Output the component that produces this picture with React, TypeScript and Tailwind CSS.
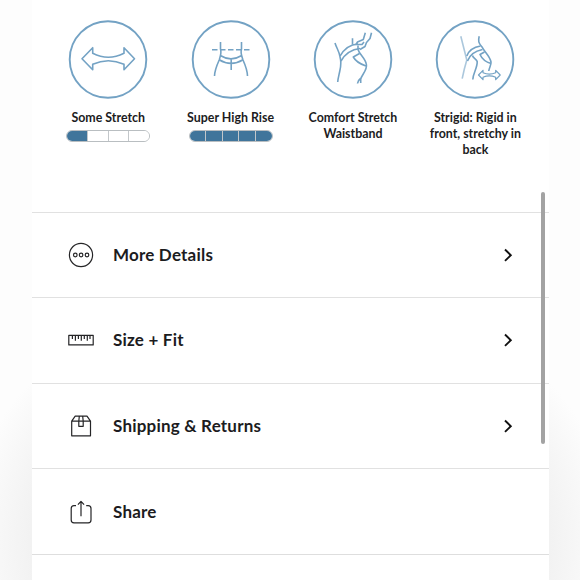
import type { ReactNode } from 'react';

type Feature = {
  label: string;
  icon: ReactNode;
  meter?: { filled: number; total: number };
};

const features: Feature[] = [
  {
    label: 'Some Stretch',
    meter: { filled: 1, total: 4 },
    icon: (
      <path d="M14 38.7 24.7 27.7V33.3Q40.3 41.3 56 33.3V27.7L66.5 38.7 56 49.7V44.3Q40.3 37.1 24.7 44.3V49.7Z" />
    ),
  },
  {
    label: 'Super High Rise',
    meter: { filled: 5, total: 5 },
    icon: (
      <>
        <path d="M21 29.7H60" strokeDasharray="5.5 2.5" />
        <path d="M29.5 22V29C30.8 33 29.3 36 28.2 40C25.5 46 23.7 50 23.5 56" />
        <path d="M50.5 22V29C49.2 33 50.7 36 52 40C54.7 46 56.3 50 56.5 56" />
        <path d="M29.8 35.7Q40 42 50.2 35.7M28.2 39.7Q40 47 52 39.7M40.2 39.5V50" />
      </>
    ),
  },
  {
    label: 'Comfort Stretch Waistband',
    icon: (
      <>
        <path d="M22 23C23.5 28 26.5 32 27 36.7C28.5 42 28 46 26.8 51C26 55 25 58 24.7 62" />
        <path d="M27 36.2C31 29 37 24.5 45 24M28 41C32 34 38 29.5 47 28.5" />
        <path d="M39.5 18.3V24.5M52.3 12.7 50.3 19.5 44.5 22 43 24.5H49L51 22M58.5 12.7 57 18.5 53.5 22.5 52 26.5 47 29.5" />
        <path d="M45 25.5V29.5C46.5 34.5 52 38 53.3 44C54.8 50 48.5 55 47.7 59V63" />
        <path d="M46.5 33.5 40.3 37C43 42 47 44 53 46M47.5 58.5C45.5 60 44.8 61.5 44.5 63.5" />
      </>
    ),
  },
  {
    label: 'Strigid: Rigid in front, stretchy in back',
    icon: (
      <>
        <path className="opacity-60" d="M25.8 16.3 31.8 40C30 46 28.5 52 27.2 58.7" />
        <path d="M44.2 16.3C43 21 43.5 23 46.8 26.7C49.5 32 55 36 56 42C56.3 45.5 54 48 53.8 51" />
        <path d="M31.8 36C34 30 39 27 45.5 26M32.5 41C35 34 40 31 47.5 29.5" />
        <path d="M37.5 35.5C38 38 41.5 39 42.2 41.5C42.5 48 38 53 37.8 59.5" />
        <path d="M49.5 32 45 34.5C47 39 51 42 56 43.5" />
        <path
          strokeWidth="1.2"
          d="M43.5 55 48 50.3V52.7Q54.3 55.5 60.7 52.7V50.3L65.2 55 60.7 59.7V57.3Q54.3 54.5 48 57.3V59.7Z"
        />
      </>
    ),
  },
];

const rows: { label: string; icon: ReactNode; chevron: boolean }[] = [
  {
    label: 'More Details',
    chevron: true,
    icon: (
      <>
        <circle cx="14" cy="14" r="11.6" />
        <circle cx="8.3" cy="14" r="1.8" />
        <circle cx="14.1" cy="14" r="1.8" />
        <circle cx="20" cy="14" r="1.8" />
      </>
    ),
  },
  {
    label: 'Size + Fit',
    chevron: true,
    icon: <path d="M1.8 9.3H26.2V18.9H1.8ZM5.4 9.3V13M8.4 9.3V14.8M11.4 9.3V13M14.3 9.3V14.8M17.3 9.3V13M20.3 9.3V14.8M23 9.3V13" />,
  },
  {
    label: 'Shipping & Returns',
    chevron: true,
    icon: <path d="M4.7 9.2 8.2 4.2H20L23.5 9.2V23.8H4.7ZM4.7 9.2H23.5M12.3 4.2 11.8 9.2V14.3H16.2V9.2L15.7 4.2" />,
  },
  {
    label: 'Share',
    chevron: false,
    icon: <path d="M9 7.7H7Q4.2 7.7 4.2 10.5V22Q4.2 24.8 7 24.8H21.2Q24 24.8 24 22V10.5Q24 7.7 21.2 7.7H19.2M14 18.3V3.7M10.9 6.6 14 3.4 17.1 6.6" />,
  },
];

function Meter({ filled, total }: { filled: number; total: number }) {
  return (
    <div className="mt-1 flex h-3 w-[84px] overflow-hidden rounded-full border border-[#b9bec1]">
      {Array.from({ length: total }, (_, i) => (
        <div
          key={i}
          className={`flex-1 border-[#c3c7ca] ${i > 0 ? 'border-l' : ''} ${i < filled ? 'bg-[#40759b]' : 'bg-white'}`}
        />
      ))}
    </div>
  );
}

export default function App() {
  return (
    <div className="h-[580px] w-[580px] overflow-hidden bg-[radial-gradient(310px_250px_at_290px_540px,#f1f1f1_82%,#fdfdfd_105%)] pl-8 font-['Lato',sans-serif] text-[#1c1c1e]">
      <main className="relative h-full w-[517px] bg-white">
        <section className="grid h-[211.5px] grid-cols-[repeat(4,122.4px)] pt-[20px] pl-[15px]">
          {features.map((feature) => (
            <div key={feature.label} className="flex flex-col items-center">
              <svg
                viewBox="0 0 80 80"
                className="size-20 shrink-0"
                fill="none"
                stroke="#73a2c4"
                strokeWidth="1.6"
                strokeLinejoin="round"
              >
                <circle cx="40" cy="39.5" r="38.3" strokeWidth="1.9" />
                {feature.icon}
              </svg>
              <p className="mt-2.5 w-[96px] text-center text-[12.4px] leading-4 font-bold">{feature.label}</p>
              {feature.meter && <Meter {...feature.meter} />}
            </div>
          ))}
        </section>

        <ul className="border-b border-[#dedede]">
          {rows.map((row) => (
            <li
              key={row.label}
              className="flex h-[85.6px] items-center border-t border-[#e1e1e1] pr-[34px] pl-[35px]"
            >
              <svg viewBox="0 0 28 28" className="size-7" fill="none" stroke="#252527" strokeWidth="1.2" strokeLinejoin="round">
                {row.icon}
              </svg>
              <span className="ml-[18px] text-[17px] leading-6 font-bold tracking-[0.2px]">{row.label}</span>
              {row.chevron && (
                <svg viewBox="0 0 14 14" className="ml-auto size-3.5" fill="none" stroke="#111" strokeWidth="1.9">
                  <path d="M4 1.5 9.8 7.2 4 12.9" />
                </svg>
              )}
            </li>
          ))}
        </ul>

        {/* scroll indicator */}
        <div className="absolute top-[192px] right-1 h-[252px] w-1 rounded-full bg-[#a3a3a3]" />
      </main>
    </div>
  );
}
